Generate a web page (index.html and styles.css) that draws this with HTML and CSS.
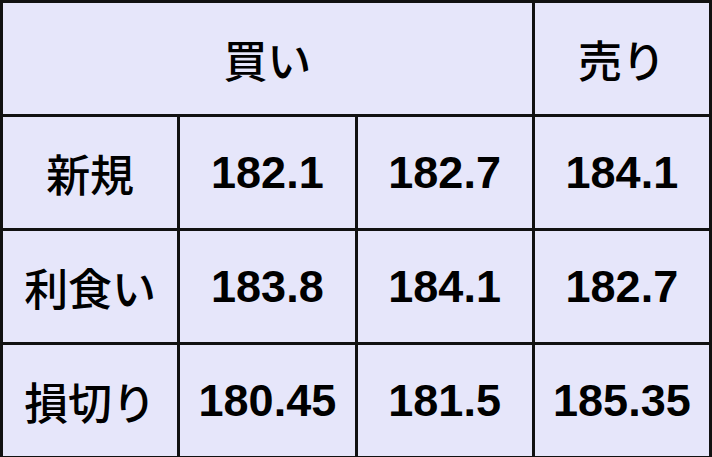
FILE: index.html
```html
<!DOCTYPE html>
<html lang="ja">
<head>
<meta charset="utf-8">
<link rel="stylesheet" href="styles.css">
</head>
<body>
<table class="grid">
  <tr>
    <td class="head" colspan="3">買い</td>
    <td class="head">売り</td>
  </tr>
  <tr>
    <td class="label">新規</td>
    <td class="num">182.1</td>
    <td class="num">182.7</td>
    <td class="num">184.1</td>
  </tr>
  <tr>
    <td class="label">利食い</td>
    <td class="num">183.8</td>
    <td class="num">184.1</td>
    <td class="num">182.7</td>
  </tr>
  <tr>
    <td class="label">損切り</td>
    <td class="num">180.45</td>
    <td class="num">181.5</td>
    <td class="num">185.35</td>
  </tr>
</table>
</body>
</html>
```
FILE: styles.css
```css
html, body {
  margin: 0;
  padding: 0;
  background: #ffffff;
}
.grid {
  width: 712px;
  height: 457px;
  border-collapse: collapse;
  table-layout: fixed;
  background: #e6e6fa;
  border: 3px solid #111;
}
.grid td {
  border: 3px solid #111;
  text-align: center;
  vertical-align: middle;
  color: #000;
  padding: 0;
  height: 111px;
}
.head, .label {
  font-family: "Noto Sans CJK JP", "Liberation Sans", sans-serif;
  font-weight: 500;
  font-size: 44px;
}
.num {
  font-family: "Liberation Sans", Arial, sans-serif;
  font-weight: bold;
  font-size: 45px;
}
```
